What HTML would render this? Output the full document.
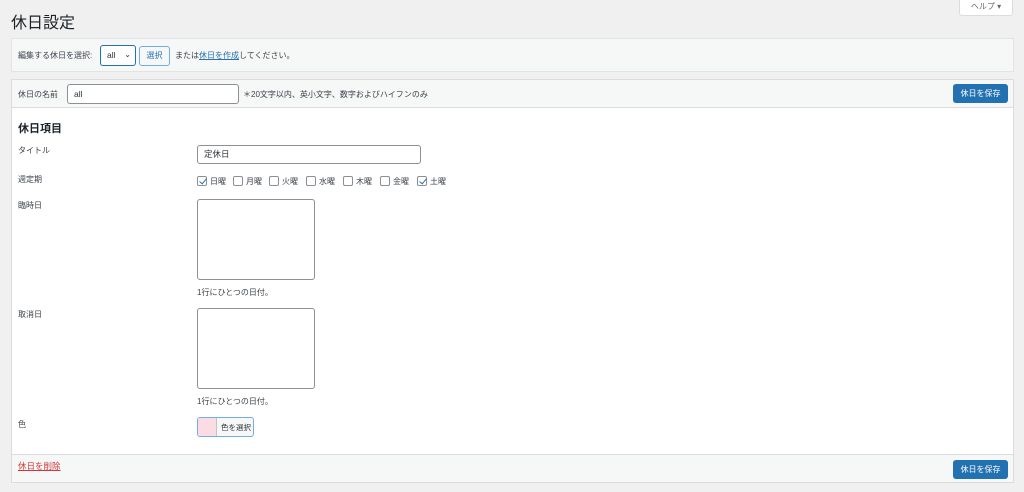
<!DOCTYPE html>
<html><head><meta charset="utf-8"><style>
*{box-sizing:border-box;margin:0;padding:0}
body{width:1024px;height:492px;background:#f0f0f1;font-family:"Liberation Sans","Noto Sans CJK JP",sans-serif;color:#3c434a;font-size:9px;position:relative;overflow:hidden}
.a{position:absolute}
h1{position:absolute;left:11px;top:9px;font-size:16px;font-weight:400;color:#1d2327}
.help{left:959px;top:-1px;width:54px;height:17px;background:#fff;border:1px solid #dcdcde;border-radius:0 0 3px 3px;font-size:8px;color:#646970;text-align:center;line-height:14px}
.p1{left:11px;top:38px;width:1003px;height:34px;background:#f6f7f7;border:1px solid #e2e3e5}
.p2{left:11px;top:79px;width:1003px;height:404px;background:#fff;border:1px solid #dcdcde}
.hd{left:0;top:0;width:1001px;height:28px;background:#f6f7f7;border-bottom:1px solid #dcdcde}
.ft{left:0;top:374px;width:1001px;height:28px;background:#f6f7f7;border-top:1px solid #dcdcde}
.btn{background:#2271b1;color:#fff;border-radius:3px;font-size:8px;text-align:center;line-height:19px;width:55px;height:19px}
.inp{background:#fff;border:1px solid #8c8f94;border-radius:3px;font-size:8.5px;padding-left:6px;color:#2c3338}
.lbl{font-size:8px;color:#3c434a}
.cb{display:inline-block;width:10px;height:10px;border:1px solid #8c8f94;border-radius:2px;vertical-align:-2px;margin-right:3px;background:#fff;position:relative}
.cb.on:after{content:"";position:absolute;left:2.5px;top:0px;width:3px;height:6px;border:solid #2271b1;border-width:0 1.5px 1.5px 0;transform:rotate(40deg)}
.days span{position:absolute;top:0;font-size:8px;white-space:nowrap}
.ta{width:118px;height:81px;background:#fff;border:1px solid #8c8f94;border-radius:3px}
</style></head><body>
<h1>休日設定</h1>
<div class="a help">ヘルプ ▾</div>
<div class="a p1">
 <div class="a lbl" style="left:6px;top:11px">編集する休日を選択:</div>
 <div class="a inp" style="left:88px;top:6px;width:36px;height:21px;border:1.5px solid #2271b1;line-height:18px">all<span style="position:absolute;right:4px;top:0;font-size:8px">⌄</span></div>
 <div class="a" style="left:127px;top:7px;width:31px;height:20px;border:1px solid #72aee6;border-radius:3px;background:#f6f7f7;color:#2271b1;font-size:8px;text-align:center;line-height:18px">選択</div>
 <div class="a lbl" style="left:163px;top:11px">または<span style="color:#2271b1;text-decoration:underline">休日を作成</span>してください。</div>
</div>
<div class="a p2">
 <div class="a hd">
  <div class="a lbl" style="left:6px;top:9px">休日の名前</div>
  <div class="a inp" style="left:55px;top:4px;width:172px;height:20px;line-height:18px">all</div>
  <div class="a lbl" style="left:231px;top:9px">＊20文字以内、英小文字、数字およびハイフンのみ</div>
  <div class="a btn" style="left:941px;top:4px">休日を保存</div>
 </div>
 <div class="a" style="left:6px;top:40px;font-size:11px;font-weight:bold;color:#1d2327">休日項目</div>
 <div class="a lbl" style="left:6px;top:65px">タイトル</div>
 <div class="a inp" style="left:185px;top:65px;width:224px;height:19px;line-height:17px">定休日</div>
 <div class="a lbl" style="left:6px;top:94px">週定期</div>
 <div class="a days" style="left:185px;top:96px">
  <span style="left:0"><i class="cb on"></i>日曜</span>
  <span style="left:36px"><i class="cb"></i>月曜</span>
  <span style="left:72px"><i class="cb"></i>火曜</span>
  <span style="left:109px"><i class="cb"></i>水曜</span>
  <span style="left:146px"><i class="cb"></i>木曜</span>
  <span style="left:183px"><i class="cb"></i>金曜</span>
  <span style="left:220px"><i class="cb on"></i>土曜</span></div>
 <div class="a lbl" style="left:6px;top:120px">臨時日</div>
 <div class="a ta" style="left:185px;top:119px"></div>
 <div class="a lbl" style="left:185px;top:207px">1行にひとつの日付。</div>
 <div class="a lbl" style="left:6px;top:229px">取消日</div>
 <div class="a ta" style="left:185px;top:228px"></div>
 <div class="a lbl" style="left:185px;top:316px">1行にひとつの日付。</div>
 <div class="a lbl" style="left:6px;top:339px">色</div>
 <div class="a" style="left:185px;top:337px;width:57px;height:20px;border:1px solid #72aee6;border-radius:3px;background:#f6f7f7;overflow:hidden">
  <div class="a" style="left:0;top:0;width:19px;height:18px;background:#fcdce4;border-right:1px solid #c3c4c7"></div>
  <div class="a" style="left:23px;top:4px;font-size:7.5px;color:#2c3338">色を選択</div>
 </div>
 <div class="a ft">
  <div class="a" style="left:6px;top:5px;font-size:8.5px;color:#d63638;text-decoration:underline">休日を削除</div>
  <div class="a btn" style="left:941px;top:5px">休日を保存</div>
 </div>
</div>
</body></html>
